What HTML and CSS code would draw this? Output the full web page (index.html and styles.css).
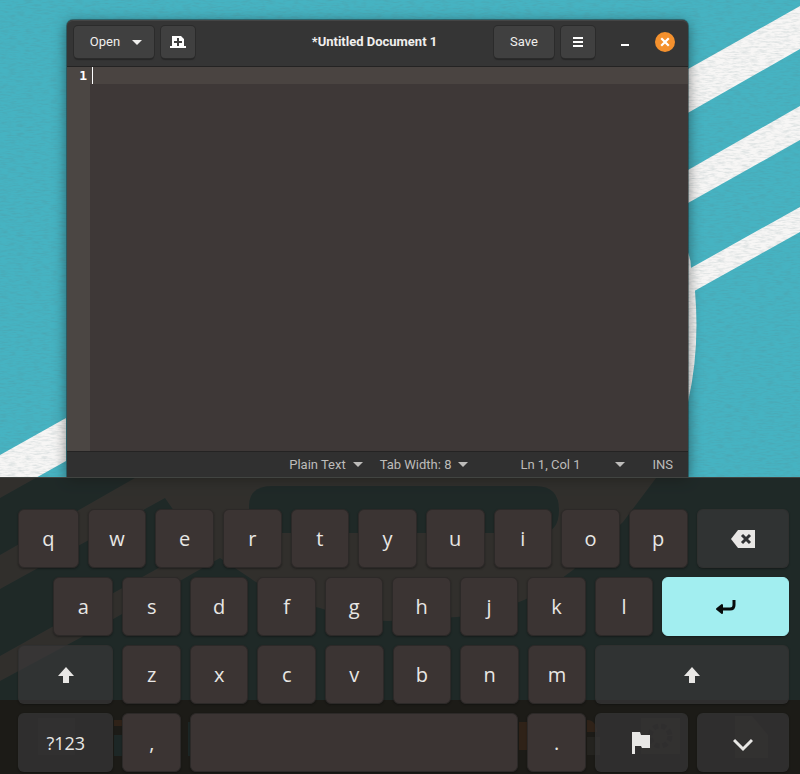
FILE: index.html
```html
<!DOCTYPE html>
<html lang="en">
<head>
<meta charset="utf-8">
<meta name="viewport" content="width=device-width, initial-scale=1">
<title>*Untitled Document 1</title>
<link rel="stylesheet" href="styles.css">
</head>
<body>
<svg class="wallpaper" viewBox="0 0 800 774" preserveAspectRatio="none" aria-hidden="true">
  <defs>
    <filter id="canvas-grain" x="0" y="0" width="100%" height="100%">
      <feTurbulence type="fractalNoise" baseFrequency="0.12 0.6" numOctaves="3" seed="4"/>
      <feColorMatrix values="0 0 0 0 0.1  0 0 0 0 0.2  0 0 0 0 0.22  0.4 0 0 0 -0.16"/>
    </filter>
  </defs>
  <rect width="800" height="774" fill="#46b3c2"/>
  <g fill="#f7f6f5">
    <path d="M600 160 800 6V49L600 163Z M688 69 800 6V49L688 112Z"/>
    <path d="M688 170 800 106V140L688 203Z"/>
    <path d="M680 274 800 207V232L680 299Z"/>
    <path d="M680 240Q691 252 691 268L695 291Q700 350 688 402H680Z"/>
    <path d="M0 455 66 418V461L0 498Z"/>
    <path d="M0 555 135 478H656L623 522 573 570Q520 612 457 617L388 621Q350 620 320 608 280 600 250 578L220 558 80 638 0 681V656L52 627 182 555 205 552 172 508 165 498 0 589Z"/>
  </g>
  <path d="M249 533V506Q249 486 272 486H536Q559 486 559 510 559 533 540 533Z" fill="#46b3c2"/>
  <rect y="700" width="800" height="74" fill="#2d2820"/>
  <g>
    <path d="M38 718H75V755H38Z" fill="#576466"/>
    <path d="M114 720H123V726H114ZM519 722H530V750H519ZM587 720Q596 720 597 732H587Z" fill="#e8762f"/>
    <path d="M114 735H123V756H114ZM188 722H191V756H188Z" fill="#3ba6b4"/>
    <path d="M587 737H600V755H587ZM641 718H680V754H641Z" fill="#78786f"/>
    <circle cx="660" cy="736" r="10" fill="none" stroke="#202020" stroke-width="5" stroke-dasharray="5 3"/>
    <path d="M735 716H752L768 735V758H735Z" fill="#78786f"/>
  </g>
  <rect width="800" height="477" filter="url(#canvas-grain)"/>
</svg>

<main class="desktop">
  <section class="window" aria-label="Text editor">
    <header class="titlebar">
      <div class="group">
        <button class="tool open" type="button">Open <i class="arrow"></i></button>
        <button class="tool icon" type="button" aria-label="New document">
          <svg width="16" height="14" viewBox="0 0 16 14"><path fill="#fff" fill-rule="evenodd" d="M2 1H11L14 4V11H16V13H0V11H2ZM7 3V6H4V8H7V11H9V8H12V6H9V3Z"/></svg>
        </button>
      </div>
      <h1 class="title">*Untitled Document 1</h1>
      <div class="group end">
        <button class="tool save" type="button">Save</button>
        <button class="tool icon" type="button" aria-label="Menu">
          <svg width="12" height="12" viewBox="0 0 12 12"><path fill="#fff" d="M1 1H11V3H1ZM1 5H11V7H1ZM1 9H11V11H1Z"/></svg>
        </button>
        <button class="control minimize" type="button" aria-label="Minimize">
          <svg width="20" height="20" viewBox="0 0 20 20"><path fill="#fff" d="M6 12H14V14H6Z"/></svg>
        </button>
        <button class="control close" type="button" aria-label="Close">
          <svg width="20" height="20" viewBox="0 0 20 20"><circle cx="10" cy="10" r="10" fill="#f4912e"/><path d="M7 7 13 13M13 7 7 13" stroke="#fff" stroke-width="2.2" stroke-linecap="square"/></svg>
        </button>
      </div>
    </header>
    <div class="editor">
      <div class="gutter">1</div>
      <span class="caret"></span>
      <textarea class="text" aria-label="Document text" spellcheck="false"></textarea>
    </div>
    <footer class="status">
      <button class="pick" type="button">Plain Text <i class="arrow"></i></button>
      <button class="pick" type="button">Tab Width: 8 <i class="arrow"></i></button>
      <button class="pick position" type="button">Ln 1, Col 1 <i class="arrow"></i></button>
      <span>INS</span>
    </footer>
  </section>
</main>

<section class="keyboard" aria-label="On-screen keyboard">
  <div class="row row-top">
    <button class="key">q</button><button class="key">w</button><button class="key">e</button><button class="key">r</button><button class="key">t</button><button class="key">y</button><button class="key">u</button><button class="key">i</button><button class="key">o</button><button class="key">p</button>
    <button class="key special" aria-label="Backspace">
      <svg width="26" height="20" viewBox="0 0 26 20"><path d="M8 1H25V19H8L1 10Z" fill="#e8e7e5"/><path d="M12 6 20 14M20 6 12 14" stroke="#303234" stroke-width="3"/></svg>
    </button>
  </div>
  <div class="row row-home">
    <button class="key">a</button><button class="key">s</button><button class="key">d</button><button class="key">f</button><button class="key">g</button><button class="key">h</button><button class="key">j</button><button class="key">k</button><button class="key">l</button>
    <button class="key enter" aria-label="Enter">
      <svg width="20" height="16" viewBox="0 0 20 16"><path d="M18 1V6Q18 10 14 10H5" fill="none" stroke="#080c0c" stroke-width="3"/><path d="M6 6V14L1 10Z" fill="#080c0c" stroke="#080c0c" stroke-width="2" stroke-linejoin="round"/></svg>
    </button>
  </div>
  <div class="row row-shift">
    <button class="key special" aria-label="Left shift">
      <svg width="16" height="16" viewBox="0 0 16 16"><path d="M8 0 16 9H11V16H5V9H0Z" fill="#e8e7e5"/></svg>
    </button>
    <button class="key">z</button><button class="key">x</button><button class="key">c</button><button class="key">v</button><button class="key">b</button><button class="key">n</button><button class="key">m</button>
    <button class="key special" aria-label="Right shift">
      <svg width="16" height="16" viewBox="0 0 16 16"><path d="M8 0 16 9H11V16H5V9H0Z" fill="#e8e7e5"/></svg>
    </button>
  </div>
  <div class="row row-space">
    <button class="key special symbols">?123</button>
    <button class="key">,</button>
    <button class="key" aria-label="Space"></button>
    <button class="key">.</button>
    <button class="key special" aria-label="Keyboard layout">
      <svg width="20" height="22" viewBox="0 0 20 22"><path d="M1 0H9L10 3H19V16H11L10 14H4V22H1Z" fill="#e8e7e5"/></svg>
    </button>
    <button class="key special" aria-label="Hide keyboard">
      <svg width="20" height="22" viewBox="0 0 20 22"><path d="M1 8 10 17 19 8" fill="none" stroke="#e8e7e5" stroke-width="3"/></svg>
    </button>
  </div>
</section>
</body>
</html>
```

FILE: styles.css
```css
* {
  box-sizing: border-box;
}

body {
  margin: 0;
  min-height: 100vh;
  display: flex;
  flex-direction: column;
  position: relative;
  overflow: hidden;
  font: 13px/18px Roboto, "Noto Sans", sans-serif;
  color: #f0efed;
}

button {
  margin: 0;
  padding: 0;
  border: 0;
  background: none;
  color: inherit;
  font: inherit;
}

svg {
  display: block;
}

.wallpaper {
  position: absolute;
  inset: 0;
  width: 100%;
  height: 100%;
  z-index: -1;
}

.desktop {
  flex: 1;
  display: flex;
  padding: 20px 112px 0 67px;
}

.window {
  flex: 1;
  min-width: 0;
  display: flex;
  flex-direction: column;
  border-radius: 6px 6px 0 0;
  background: #3e3837;
  box-shadow: 0 0 0 1px rgba(30, 50, 52, .5), 0 3px 14px rgba(0, 0, 0, .5);
}

.titlebar {
  display: grid;
  grid-template-columns: 1fr auto 1fr;
  align-items: center;
  height: 47px;
  padding: 0 13px 2px 7px;
  border-radius: 6px 6px 0 0;
  border-bottom: 1px solid #242323;
  background: #353535;
  box-shadow: inset 0 1px #454545;
}

.group {
  display: flex;
  align-items: center;
  gap: 7px;
}

.end {
  justify-content: flex-end;
}

.title {
  margin: 0;
  font-size: 13px;
  font-weight: 700;
}

.tool {
  display: flex;
  align-items: center;
  justify-content: center;
  height: 32px;
  border-radius: 4px;
  background: #404040;
  box-shadow: 0 0 0 1px #2b2b2b, 0 2px 1px #262626;
}

.open {
  width: 80px;
  padding-left: 4px;
  gap: 12px;
}

.save {
  width: 60px;
}

.icon {
  width: 34px;
}

.arrow {
  border: 5px solid transparent;
  border-top-color: currentColor;
  border-bottom: 0;
}

.minimize {
  margin: 0 13px;
}

.editor {
  flex: 1;
  display: flex;
  background: linear-gradient(#4a4441 17px, #3e3837 17px);
}

.gutter {
  width: 23px;
  padding-right: 3px;
  background: #4b4643;
  color: #fff;
  font: bold 13px/18px "DejaVu Sans Mono", monospace;
  text-align: right;
}

.caret {
  width: 1px;
  height: 17px;
  margin-left: 2px;
  background: #fff;
}

.text {
  flex: 1;
  min-width: 0;
  padding: 0 2px;
  border: 0;
  outline: 0;
  resize: none;
  background: none;
  color: inherit;
  font: 13px/18px "DejaVu Sans Mono", monospace;
}

.status {
  display: flex;
  align-items: center;
  justify-content: flex-end;
  height: 26px;
  padding-right: 15px;
  border-top: 1px solid #242323;
  background: #303030;
  color: #bdbcba;
}

.pick {
  display: flex;
  align-items: center;
  gap: 7px;
  margin-right: 17px;
}

.position {
  justify-content: space-between;
  width: 105px;
  margin-left: 35px;
  margin-right: 27px;
}

.keyboard {
  display: grid;
  gap: 9px;
  padding: 31px 11px 2px 18px;
  border-top: 1px solid #414441;
  background: rgba(27, 25, 22, .9);
}

.row {
  display: grid;
  gap: 9px;
}

.row-top {
  grid-template-columns: 61fr repeat(9, 59fr) 93fr;
}

.row-home {
  padding-left: 35px;
  grid-template-columns: 61fr repeat(8, 59fr) 128fr;
}

.row-shift {
  grid-template-columns: 96fr repeat(7, 59fr) 195fr;
}

.row-space {
  grid-template-columns: 96fr 59fr 330fr 59fr 93fr 93fr;
}

.key {
  display: flex;
  align-items: center;
  justify-content: center;
  min-width: 0;
  height: 59px;
  border: 1px solid #2c2928;
  border-radius: 6px;
  background: #3b3433;
  color: #e8e7e5;
  font: 20px/28px "Open Sans", "Noto Sans", sans-serif;
  box-shadow: 0 1px 2px rgba(10, 10, 10, .4);
}

.special {
  border-color: rgba(48, 48, 48, .8);
  background: rgba(58, 57, 59, .65);
}

.symbols {
  font-size: 18px;
}

.enter {
  border-color: #a2eef0;
  background: #a2eef0;
}
```
